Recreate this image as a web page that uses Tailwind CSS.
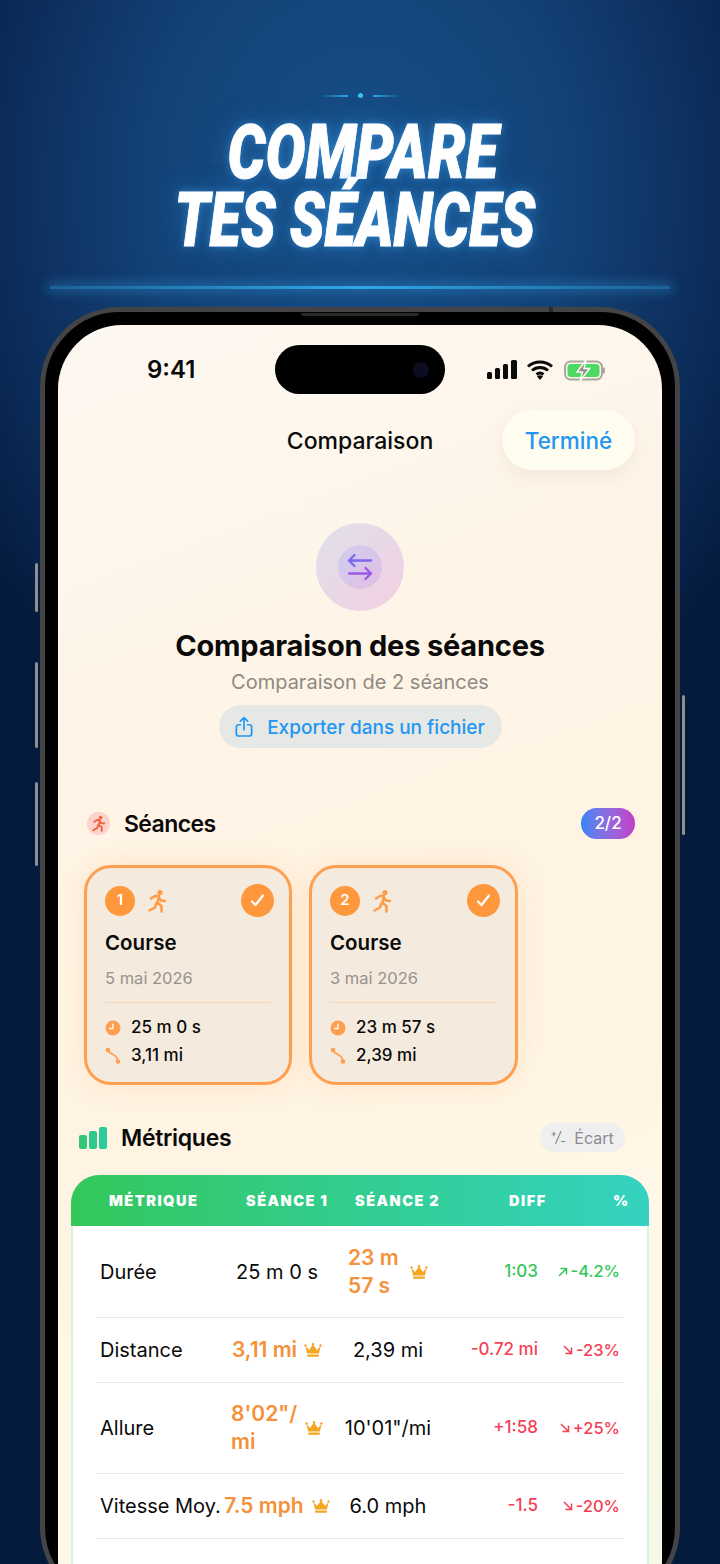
<!DOCTYPE html>
<html lang="fr">
<head>
    <meta charset="UTF-8">
    <meta name="viewport" content="width=device-width, initial-scale=1.0">
    <title>Compare tes séances</title>
    <script src="https://cdn.jsdelivr.net/npm/@tailwindcss/browser@4"></script>
</head>
<body class="font-['Inter',sans-serif] text-[#0a0a0a]">
<div class="relative w-[720px] h-[1564px] overflow-hidden bg-[radial-gradient(ellipse_470px_600px_at_50%_190px,#174f88_0%,#134277_45%,#0d2f5e_72%,#051b3e_100%)] bg-[#041a3c]">

    <!-- headline -->
    <header class="h-[307px] flex flex-col items-center">
        <div class="mt-[94px] h-[3px] flex items-center gap-[10px]">
            <span class="w-[28px] h-[2px] bg-gradient-to-r from-transparent to-[#29a9e8]"></span>
            <span class="w-[5px] h-[5px] rounded-full bg-[#35c4f5]"></span>
            <span class="w-[28px] h-[2px] bg-gradient-to-l from-transparent to-[#29a9e8]"></span>
        </div>
        <h2 class="mt-[21px] text-center text-white font-['Roboto',sans-serif] font-black italic uppercase text-[75px] leading-[68px] whitespace-nowrap [-webkit-text-stroke:1px_white] [text-shadow:0_0_10px_rgba(70,175,255,.5),0_0_30px_rgba(70,175,255,.35)]">
            <span class="block scale-x-[.795] translate-x-[3px]">Compare</span>
            <span class="block scale-x-[.765] -translate-x-[5px]">Tes séances</span>
        </h2>
        <div class="mt-[32px] w-[620px] h-[3px] bg-[linear-gradient(90deg,#1b6298,#2fa8e6_50%,#1b6298)] shadow-[0_0_12px_3px_rgba(60,170,240,.35)]"></div>
    </header>

    <!-- side buttons -->
    <span class="absolute left-[35px] top-[563px] w-[3px] h-[49px] rounded-full bg-[#8f8f8f]"></span>
    <span class="absolute left-[35px] top-[662px] w-[3px] h-[86px] rounded-full bg-[#8f8f8f]"></span>
    <span class="absolute left-[35px] top-[782px] w-[3px] h-[84px] rounded-full bg-[#8f8f8f]"></span>
    <span class="absolute left-[682px] top-[695px] w-[3px] h-[140px] rounded-full bg-[#8f8f8f]"></span>
    <!-- speaker slit and antenna band -->
    <span class="absolute left-[301px] top-[313px] w-[118px] h-[3px] rounded-b-full bg-[#2a2a2c]"></span>
    <span class="absolute left-[549px] top-[307px] w-[4px] h-[5px] bg-[#2a2a2c]"></span>

    <!-- phone -->
    <div class="ml-[40px] w-[640px] h-[1300px] rounded-[80px] border-[5px] border-[#444446] bg-black pt-[13px] px-[13px]">
        <div class="h-[1300px] w-[604px] rounded-[64px] overflow-hidden bg-[linear-gradient(160deg,#fdf8f1_0%,#fff4e5_35%,#fff3e2_55%,#fff8e8_75%,#f2f8e6_100%)]">

            <!-- status bar -->
            <div class="mt-[20px] h-[49px] pt-[20px] flex">
                <div class="w-[217px] pl-[89px] -mt-[20px] flex items-center text-[24px] leading-none font-semibold">9:41</div>
                <div class="w-[170px] -mt-[20px] h-[49px] rounded-full bg-black flex items-center justify-end pr-[16px]">
                    <span class="w-[16px] h-[16px] rounded-full bg-[#0c0c22]"></span>
                </div>
                <div class="-mt-[20px] pl-[42px] flex items-center">
                    <svg class="w-[120px] h-[24px]" viewBox="0 0 120 24">
                        <rect x="0" y="14" width="5" height="7" rx="1.5" fill="#0a0a0a"/>
                        <rect x="8" y="10" width="5" height="11" rx="1.5" fill="#0a0a0a"/>
                        <rect x="16" y="6" width="5" height="15" rx="1.5" fill="#0a0a0a"/>
                        <rect x="24" y="2" width="6" height="19" rx="1.5" fill="#0a0a0a"/>
                        <path d="M41 8.500a18 18 0 0 1 24 0M45 12.500a12 12 0 0 1 16 0M49.500 16.500a5.500 5.500 0 0 1 7 0" fill="none" stroke="#0a0a0a" stroke-width="3"/>
                        <path d="M53 22l-3-3.500a4.500 4.500 0 0 1 6 0z" fill="#0a0a0a"/>
                        <rect x="78" y="3.500" width="37" height="18" rx="5.500" fill="none" stroke="#a8a8a0" stroke-width="2"/>
                        <rect x="80.500" y="6" width="32" height="13" rx="3.500" fill="#4cd964"/>
                        <path d="M99 2l-9 12h5.500l-2.500 9 9.500-12.500h-5.500z" fill="#8f8f88" stroke="#fdf8f1" stroke-width="1.500"/>
                        <rect x="116" y="9.500" width="2" height="6" rx="1" fill="#a8a8a0"/>
                    </svg>
                </div>
            </div>

            <!-- nav -->
            <div class="mt-[16px] h-[60px] px-[27px] grid grid-cols-[1fr_auto_1fr] items-center">
                <span></span>
                <span class="pt-[2px] text-[23px] font-medium">Comparaison</span>
                <span class="justify-self-end w-[133px] h-[60px] pt-[2px] rounded-[30px] bg-[#fffcf0] shadow-[0_8px_20px_rgba(120,90,50,.08)] flex items-center justify-center text-[22.5px] font-medium text-[#2196f3]">Terminé</span>
            </div>

            <!-- hero -->
            <div class="mt-[53px] flex flex-col items-center">
                <div class="w-[88px] h-[88px] rounded-full bg-gradient-to-br from-[#dfe0ea] to-[#f3cfe2] flex items-center justify-center">
                    <div class="w-[44px] h-[44px] rounded-full bg-gradient-to-br from-[#cfcdf0] to-[#e2bfe2] flex items-center justify-center">
                        <svg class="w-[26px] h-[26px]" viewBox="0 0 26 26" fill="none" stroke-width="2.300" stroke-linecap="round" stroke-linejoin="round">
                            <path d="M24 6.500H2M7.500 1L2 6.500 7.500 12" stroke="#7a68ee"/>
                            <path d="M2 19.500h22M18.500 14l5.500 5.500-5.500 5.500" stroke="#9a5ae6"/>
                        </svg>
                    </div>
                </div>
                <h1 class="mt-[17px] text-[29px] leading-[36px] font-bold tracking-[-.2px]">Comparaison des séances</h1>
                <p class="mt-[5px] text-[20px] leading-[26px] text-[#8f8a84]">Comparaison de 2 séances</p>
                <div class="mt-[10px] w-[283px] h-[43px] pt-[3px] rounded-full bg-[#e6e8e6] flex items-center justify-center gap-[14px] text-[19px] font-medium text-[#2196f3]">
                    <svg class="-mt-[3px] w-[18px] h-[22px]" viewBox="0 0 20 24" fill="none" stroke="#2196f3" stroke-width="1.900" stroke-linecap="round" stroke-linejoin="round">
                        <path d="M6 9.500H4a2.500 2.500 0 0 0-2.500 2.500v7.500A2.500 2.500 0 0 0 4 22h12a2.500 2.500 0 0 0 2.500-2.500V12A2.500 2.500 0 0 0 16 9.500h-2"/>
                        <path d="M10 15V2M6 5.500L10 1.500l4 4"/>
                    </svg>
                    Exporter dans un fichier
                </div>
            </div>

            <!-- séances -->
            <div class="mt-[60px] h-[31px] pl-[29px] pr-[27px] flex items-center justify-between">
                <div class="flex items-center gap-[14px]">
                    <span class="w-[23px] h-[23px] rounded-full bg-[#fbd3cb] flex items-center justify-center">
                        <svg class="w-[17px] h-[17px]" viewBox="0 0 24 24" fill="none" stroke="#f0603f" stroke-width="2.600" stroke-linecap="round" stroke-linejoin="round">
                            <circle cx="15" cy="3.500" r="2.500" fill="#f0603f" stroke="none"/>
                            <path d="M6 9.500l4-2.500h4l-1.500 7 4 3v5.500M13.500 8l2.500 3.500 4 .5M11.500 14l-1.500 4.500-5.500 3"/>
                        </svg>
                    </span>
                    <span class="pt-[2px] text-[23px] font-semibold tracking-[-.6px]">Séances</span>
                </div>
                <span class="w-[54px] h-[31px] rounded-full bg-gradient-to-r from-[#2b85f5] to-[#c23cc8] flex items-center justify-center text-white text-[17px] font-medium">2/2</span>
            </div>

            <div class="mt-[26px] pl-[26px] flex gap-[17px]">
                <!-- card 1 -->
                <div class="w-[208px] h-[220px] rounded-[27px] border-[3px] border-[#ff9e4f] bg-[#f5eade] shadow-[0_0_26px_rgba(255,160,70,.18)] pt-[16px] px-[18px]">
                    <div class="h-[33px] flex items-center">
                        <span class="w-[30px] h-[30px] rounded-full bg-[#ff973c] flex items-center justify-center text-white text-[15px] font-semibold">1</span>
                        <svg class="ml-[10px] w-[24px] h-[24px]" viewBox="0 0 24 24" fill="none" stroke="#ff9a45" stroke-width="2.500" stroke-linecap="round" stroke-linejoin="round">
                            <circle cx="15" cy="3.500" r="2.600" fill="#ff9a45" stroke="none"/>
                            <path d="M6 9.500l4-2.500h4l-1.500 7 4 3v5.500M13.500 8l2.500 3.500 4 .5M11.500 14l-1.500 4.500-5.500 3"/>
                        </svg>
                        <span class="ml-auto -mr-[3px] w-[33px] h-[33px] rounded-full bg-[#ff973c] flex items-center justify-center">
                            <svg class="w-[17px] h-[17px]" viewBox="0 0 17 17" fill="none" stroke="#fff" stroke-width="2.200" stroke-linecap="round" stroke-linejoin="round"><path d="M3 9.500l3.500 3.500L14 3.500"/></svg>
                        </span>
                    </div>
                    <p class="mt-[12px] text-[20.500px] leading-[28px] font-semibold">Course</p>
                    <p class="mt-[10px] text-[16.500px] leading-[22px] text-[#97928c]">5 mai 2026</p>
                    <div class="mt-[13px] h-px bg-[#f6d6b4]"></div>
                    <div class="mt-[13px] h-[24px] flex items-center gap-[10px] text-[17px] font-medium">
                        <svg class="w-[16px] h-[16px]" viewBox="0 0 16 16"><circle cx="8" cy="8" r="7.500" fill="#ff9e4f"/><path d="M8 3.500V8.500H4" fill="none" stroke="#fff" stroke-width="1.300"/></svg>
                        25 m 0 s
                    </div>
                    <div class="mt-[4px] h-[24px] flex items-center gap-[10px] text-[17px] font-medium">
                        <svg class="w-[16px] h-[18px]" viewBox="0 0 16 18" fill="none"><path d="M3 3c1 5 9 3 10 11" stroke="#ff9e4f" stroke-width="1.600"/><circle cx="3" cy="3" r="2.300" fill="#ff9e4f"/><circle cx="13" cy="14.500" r="2.300" fill="#ff9e4f"/></svg>
                        3,11 mi
                    </div>
                </div>
                <!-- card 2 -->
                <div class="w-[209px] h-[220px] rounded-[27px] border-[3px] border-[#ff9e4f] bg-[#f5eade] shadow-[0_0_26px_rgba(255,160,70,.18)] pt-[16px] px-[18px]">
                    <div class="h-[33px] flex items-center">
                        <span class="w-[30px] h-[30px] rounded-full bg-[#ff973c] flex items-center justify-center text-white text-[15px] font-semibold">2</span>
                        <svg class="ml-[10px] w-[24px] h-[24px]" viewBox="0 0 24 24" fill="none" stroke="#ff9a45" stroke-width="2.500" stroke-linecap="round" stroke-linejoin="round">
                            <circle cx="15" cy="3.500" r="2.600" fill="#ff9a45" stroke="none"/>
                            <path d="M6 9.500l4-2.500h4l-1.500 7 4 3v5.500M13.500 8l2.500 3.500 4 .5M11.500 14l-1.500 4.500-5.500 3"/>
                        </svg>
                        <span class="ml-auto -mr-[3px] w-[33px] h-[33px] rounded-full bg-[#ff973c] flex items-center justify-center">
                            <svg class="w-[17px] h-[17px]" viewBox="0 0 17 17" fill="none" stroke="#fff" stroke-width="2.200" stroke-linecap="round" stroke-linejoin="round"><path d="M3 9.500l3.500 3.500L14 3.500"/></svg>
                        </span>
                    </div>
                    <p class="mt-[12px] text-[20.500px] leading-[28px] font-semibold">Course</p>
                    <p class="mt-[10px] text-[16.500px] leading-[22px] text-[#97928c]">3 mai 2026</p>
                    <div class="mt-[13px] h-px bg-[#f6d6b4]"></div>
                    <div class="mt-[13px] h-[24px] flex items-center gap-[10px] text-[17px] font-medium">
                        <svg class="w-[16px] h-[16px]" viewBox="0 0 16 16"><circle cx="8" cy="8" r="7.500" fill="#ff9e4f"/><path d="M8 3.500V8.500H4" fill="none" stroke="#fff" stroke-width="1.300"/></svg>
                        23 m 57 s
                    </div>
                    <div class="mt-[4px] h-[24px] flex items-center gap-[10px] text-[17px] font-medium">
                        <svg class="w-[16px] h-[18px]" viewBox="0 0 16 18" fill="none"><path d="M3 3c1 5 9 3 10 11" stroke="#ff9e4f" stroke-width="1.600"/><circle cx="3" cy="3" r="2.300" fill="#ff9e4f"/><circle cx="13" cy="14.500" r="2.300" fill="#ff9e4f"/></svg>
                        2,39 mi
                    </div>
                </div>
            </div>

            <!-- métriques -->
            <div class="mt-[38px] h-[29px] pl-[21px] pr-[37px] flex items-center justify-between">
                <div class="flex items-center gap-[14px]">
                    <svg class="w-[28px] h-[22px]" viewBox="0 0 28 22">
                        <rect x="0" y="8" width="8" height="14" rx="2" fill="#34c77b"/>
                        <rect x="10" y="4" width="8" height="18" rx="2" fill="#2fc98b"/>
                        <rect x="20" y="0" width="8" height="22" rx="2" fill="#2bcb9c"/>
                    </svg>
                    <span class="pt-[2px] text-[23px] font-semibold tracking-[-.3px]">Métriques</span>
                </div>
                <span class="w-[85px] h-[29px] rounded-full bg-[#f0eff0] flex items-center justify-center gap-[8px] text-[16px] text-[#8b8b92]">
                    <svg class="w-[15px] h-[15px]" viewBox="0 0 15 15" fill="none" stroke="#8b8b92" stroke-width="1.200"><path d="M10 1L4.500 14M0.500 4h4.500M2.750 1.750v4.500M10 11.500h4.500"/></svg>
                    Écart
                </span>
            </div>

            <!-- table -->
            <div class="mt-[23px] mx-[13px]">
                <div class="h-[51px] pl-[38px] rounded-t-[28px] bg-gradient-to-r from-[#34c759] to-[#35d2c0] flex items-center text-white text-[14.500px] font-black tracking-[1.500px]">
                    <span class="w-[137px]">MÉTRIQUE</span>
                    <span class="w-[109px]">SÉANCE 1</span>
                    <span class="w-[154px]">SÉANCE 2</span>
                    <span class="w-[104px]">DIFF</span>
                    <span>%</span>
                </div>

                <div class="bg-white border-x-[2px] border-[#d8f3d6]">
                    <div class="mx-[23px] border-b border-[#e8e8ea] h-[92px] pl-[4px] grid grid-cols-[122px_110px_112px_94px_82px] items-center text-[20px]">
                        <span>Durée</span>
                        <span class="text-center">25 m 0 s</span>
                        <span class="flex items-center justify-center gap-[10px] font-semibold text-[21px] text-[#f5913a] leading-[28px]">
                            <span class="w-[52px] whitespace-nowrap">23 m<br>57 s</span>
                            <svg class="w-[18px] h-[14px]" viewBox="0 0 18 14" fill="#f5a623"><path d="M1.500 3L5 7 9 1.500 13 7l3.500-4L15 10.500H3z"/><circle cx="1.500" cy="2.500" r="1.200"/><circle cx="9" cy="1.200" r="1.200"/><circle cx="16.500" cy="2.500" r="1.200"/><rect x="3" y="11.500" width="12" height="2.300" rx="1"/></svg>
                        </span>
                        <span class="text-right text-[17px] font-medium text-[#34c759]">1:03</span>
                        <span class="flex items-center justify-end gap-[3px] text-[16.500px] font-medium text-[#34c759]">
                            <svg class="w-[10px] h-[10px]" viewBox="0 0 10 10" fill="none" stroke="#34c759" stroke-width="1.500"><path d="M1 9L8.500 1.500M2.500 1.500h6v6"/></svg>
                            -4.2%
                        </span>
                    </div>

                    <div class="mx-[23px] border-b border-[#e8e8ea] h-[65px] pl-[4px] grid grid-cols-[122px_110px_112px_94px_82px] items-center text-[20px]">
                        <span>Distance</span>
                        <span class="flex items-center justify-center gap-[7px] font-semibold text-[21px] text-[#f5913a]">
                            3,11 mi
                            <svg class="w-[18px] h-[14px]" viewBox="0 0 18 14" fill="#f5a623"><path d="M1.500 3L5 7 9 1.500 13 7l3.500-4L15 10.500H3z"/><circle cx="1.500" cy="2.500" r="1.200"/><circle cx="9" cy="1.200" r="1.200"/><circle cx="16.500" cy="2.500" r="1.200"/><rect x="3" y="11.500" width="12" height="2.300" rx="1"/></svg>
                        </span>
                        <span class="text-center">2,39 mi</span>
                        <span class="text-right text-[17px] font-medium text-[#f43f55] whitespace-nowrap">-0.72 mi</span>
                        <span class="flex items-center justify-end gap-[3px] text-[16.500px] font-medium text-[#f43f55]">
                            <svg class="w-[10px] h-[10px]" viewBox="0 0 10 10" fill="none" stroke="#f43f55" stroke-width="1.500"><path d="M1 1l7.500 7.500M2.500 8.500h6v-6"/></svg>
                            -23%
                        </span>
                    </div>

                    <div class="mx-[23px] border-b border-[#e8e8ea] h-[91px] pl-[4px] grid grid-cols-[122px_110px_112px_94px_82px] items-center text-[20px]">
                        <span>Allure</span>
                        <span class="flex items-center justify-center gap-[8px] font-semibold text-[21px] text-[#f5913a] leading-[28px]">
                            <span class="w-[66px]">8'02"/<br>mi</span>
                            <svg class="w-[18px] h-[14px]" viewBox="0 0 18 14" fill="#f5a623"><path d="M1.500 3L5 7 9 1.500 13 7l3.500-4L15 10.500H3z"/><circle cx="1.500" cy="2.500" r="1.200"/><circle cx="9" cy="1.200" r="1.200"/><circle cx="16.500" cy="2.500" r="1.200"/><rect x="3" y="11.500" width="12" height="2.300" rx="1"/></svg>
                        </span>
                        <span class="text-center">10'01"/mi</span>
                        <span class="text-right text-[17px] font-medium text-[#f43f55]">+1:58</span>
                        <span class="flex items-center justify-end gap-[3px] text-[16.500px] font-medium text-[#f43f55]">
                            <svg class="w-[10px] h-[10px]" viewBox="0 0 10 10" fill="none" stroke="#f43f55" stroke-width="1.500"><path d="M1 1l7.500 7.500M2.500 8.500h6v-6"/></svg>
                            +25%
                        </span>
                    </div>

                    <div class="mx-[23px] border-b border-[#e8e8ea] h-[65px] pl-[4px] grid grid-cols-[122px_110px_112px_94px_82px] items-center text-[20px]">
                        <span class="whitespace-nowrap">Vitesse Moy.</span>
                        <span class="flex items-center justify-center gap-[8px] font-semibold text-[21px] text-[#f5913a] whitespace-nowrap">
                            7.5 mph
                            <svg class="w-[18px] h-[14px] shrink-0" viewBox="0 0 18 14" fill="#f5a623"><path d="M1.500 3L5 7 9 1.500 13 7l3.500-4L15 10.500H3z"/><circle cx="1.500" cy="2.500" r="1.200"/><circle cx="9" cy="1.200" r="1.200"/><circle cx="16.500" cy="2.500" r="1.200"/><rect x="3" y="11.500" width="12" height="2.300" rx="1"/></svg>
                        </span>
                        <span class="text-center">6.0 mph</span>
                        <span class="text-right text-[17px] font-medium text-[#f43f55]">-1.5</span>
                        <span class="flex items-center justify-end gap-[3px] text-[16.500px] font-medium text-[#f43f55]">
                            <svg class="w-[10px] h-[10px]" viewBox="0 0 10 10" fill="none" stroke="#f43f55" stroke-width="1.500"><path d="M1 1l7.500 7.500M2.500 8.500h6v-6"/></svg>
                            -20%
                        </span>
                    </div>

                    <div class="mx-[23px] h-[65px] pl-[4px] flex items-center text-[20px]">Calories</div>
                </div>
            </div>
        </div>
    </div>
</div>
</body>
</html>
